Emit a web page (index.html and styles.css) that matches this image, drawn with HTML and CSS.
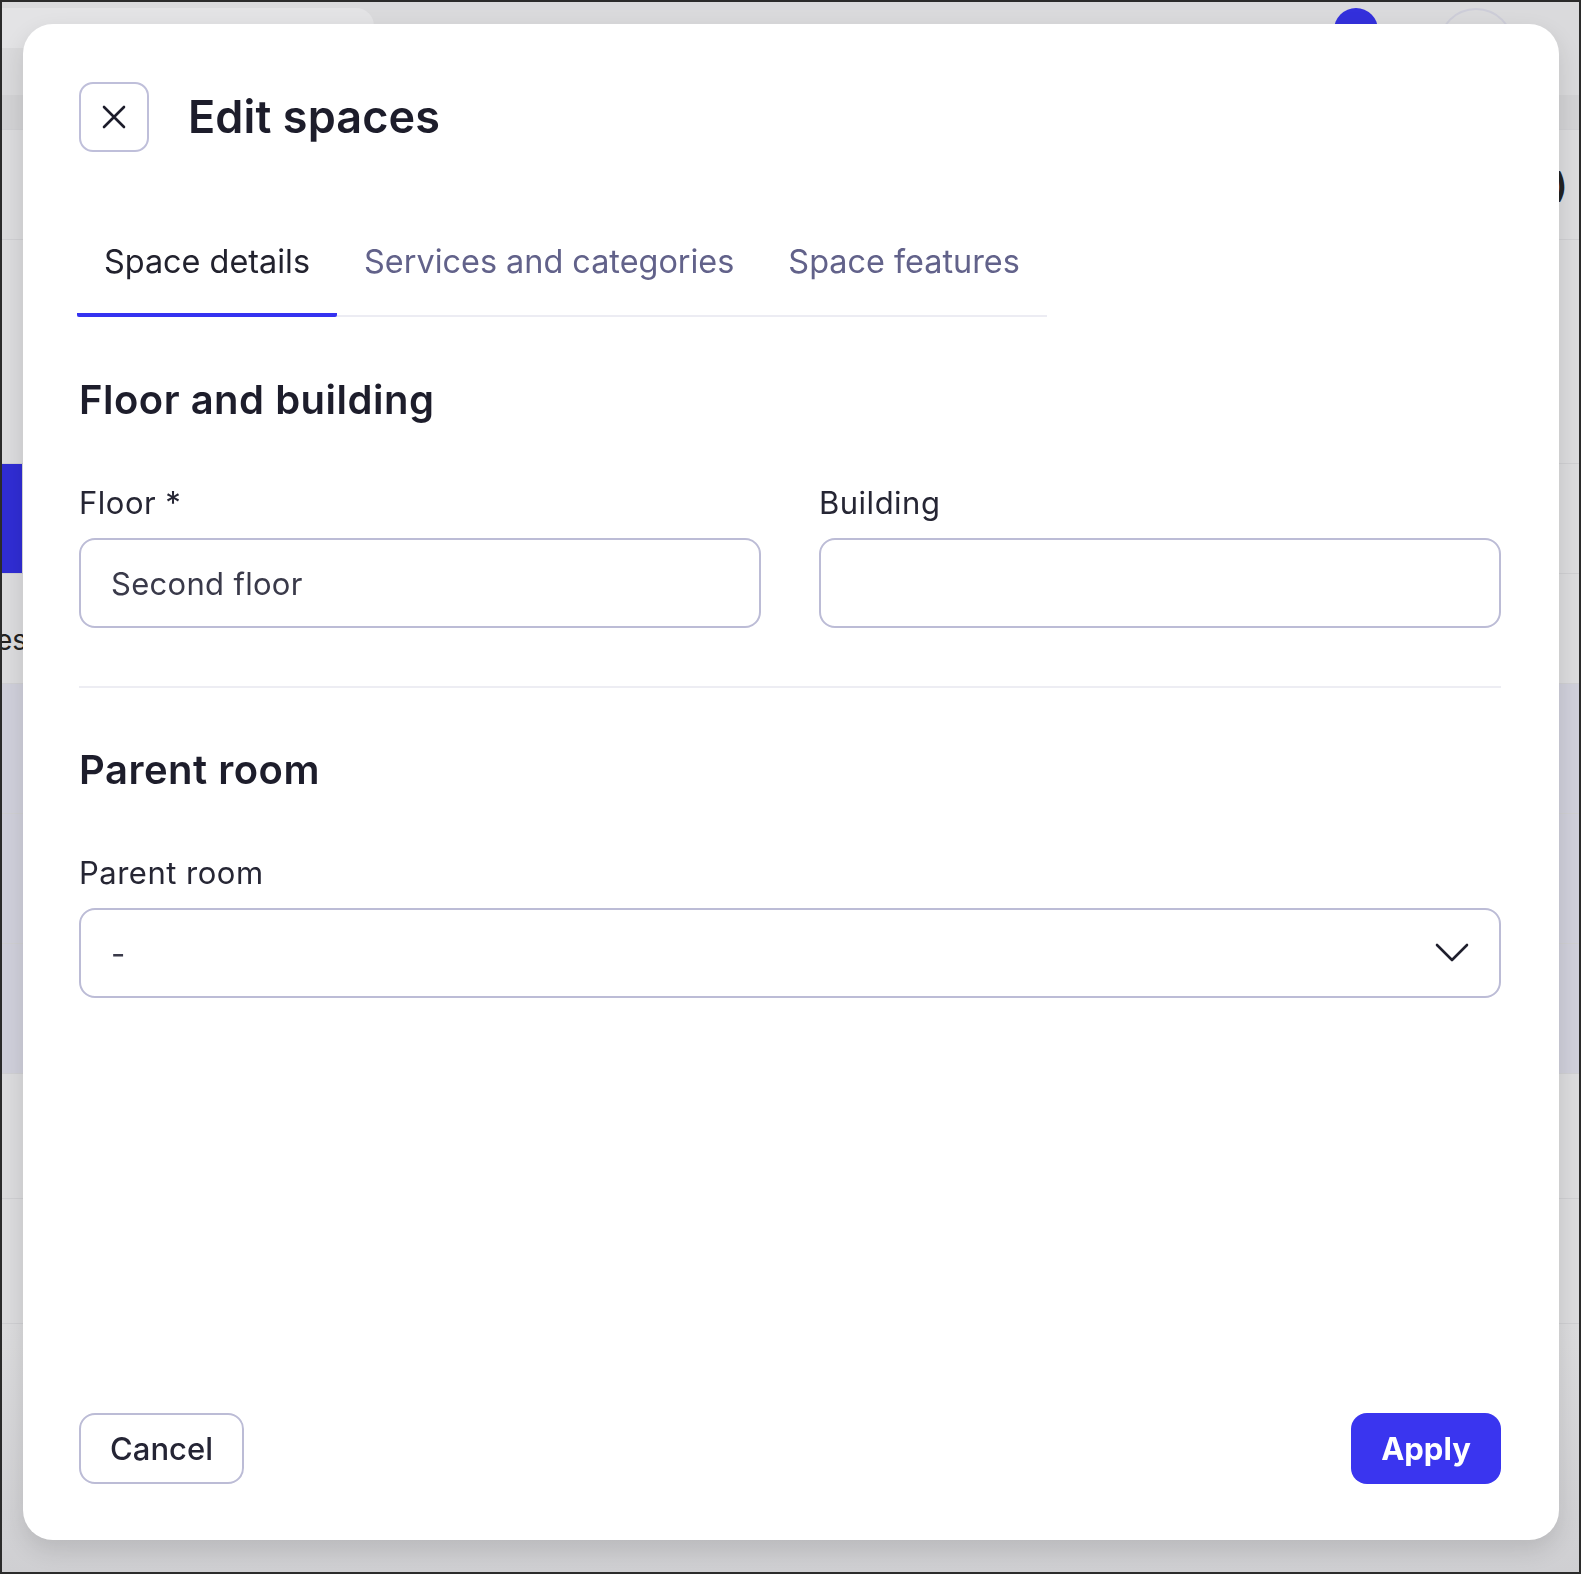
FILE: index.html
```html
<!DOCTYPE html>
<html lang="en">
<head>
    <meta charset="UTF-8">
    <meta name="viewport" content="width=device-width, initial-scale=1.0">
    <title>Edit spaces</title>
    <link rel="stylesheet" href="styles.css">
</head>
<body>
    <div class="app">
        <div class="topbar">
            <div class="crumb"></div>
            <div class="badge"></div>
            <div class="avatar"></div>
        </div>
        <div class="row row-dark"></div>
        <div class="row row-head"><span class="side"></span><span class="more">)</span></div>
        <div class="row row-tall"></div>
        <div class="row row-sel"><span class="side"></span></div>
        <div class="row row-label"><span class="side">es</span></div>
        <div class="row row-lav"></div>
        <div class="row row-lav"></div>
        <div class="row row-lav"></div>
        <div class="row"></div>
        <div class="row"></div>
        <div class="row row-last"></div>
    </div>

    <div class="overlay">
        <div class="modal">
            <div class="modal-header">
                <button class="close-btn" aria-label="Close">
                    <svg width="24" height="24" viewBox="0 0 24 24" fill="none" stroke="#1c1c2a" stroke-width="2.6" stroke-linecap="round">
                        <path d="M2 2 L22 22 M22 2 L2 22"/>
                    </svg>
                </button>
                <h1>Edit spaces</h1>
            </div>

            <div class="tabs">
                <div class="tab active">Space details</div>
                <div class="tab">Services and categories</div>
                <div class="tab">Space features</div>
            </div>

            <h2>Floor and building</h2>
            <div class="form-row">
                <div class="field">
                    <label for="floor">Floor *</label>
                    <input type="text" id="floor" value="Second floor">
                </div>
                <div class="field">
                    <label for="building">Building</label>
                    <input type="text" id="building">
                </div>
            </div>

            <hr class="divider">

            <h2 class="second">Parent room</h2>
            <div class="field">
                <label for="parent">Parent room</label>
                <div class="select" id="parent">
                    <span>-</span>
                    <svg width="34" height="20" viewBox="0 0 34 20" fill="none" stroke="#1f1f2d" stroke-width="2.6" stroke-linecap="round" stroke-linejoin="round">
                        <path d="M2 2 L17 17 L32 2"/>
                    </svg>
                </div>
            </div>

            <div class="modal-footer">
                <button class="btn btn-secondary">Cancel</button>
                <button class="btn btn-primary">Apply</button>
            </div>
        </div>
    </div>
</body>
</html>
```

FILE: styles.css
```css
* {
    box-sizing: border-box;
}

body {
    margin: 0;
    font-family: Inter, "Noto Sans", sans-serif;
    background: #dcdcde;
}

/* dimmed app behind the dialog */
.app {
    height: 1574px;
    border: 2px solid #2b2b2b;
    background: #dcdcde;
    display: flex;
    flex-direction: column;
    overflow: hidden;
}

.topbar {
    height: 93px;
    display: flex;
    align-items: flex-start;
    padding-top: 6px;
    background: #dadadc;
}

.crumb {
    width: 372px;
    height: 40px;
    background: #e3e3e5;
    border-radius: 0 18px 0 0;
}

.badge {
    width: 44px;
    height: 44px;
    margin-left: 960px;
    border-radius: 50%;
    background: #3330dc;
}

.avatar {
    width: 76px;
    height: 76px;
    margin-left: 60px;
    border-radius: 50%;
    border: 2px solid #cdcdd8;
}

.row {
    height: 125px;
    display: flex;
    align-items: center;
    border-bottom: 1px solid #d0d0d3;
}

.row-dark {
    height: 35px;
    background: #d3d3d5;
}

.row-head {
    height: 110px;
    justify-content: space-between;
}

.more {
    font-size: 34px;
    font-weight: 700;
    color: #222;
    margin-right: 12px;
}

.row-tall {
    height: 224px;
}

.row-sel {
    height: 110px;
    align-items: stretch;
}

.row-sel .side {
    width: 20px;
    background: #302dd4;
}

.row-label {
    height: 110px;
    padding-top: 22px;
}

.row-label .side {
    font-size: 28px;
    color: #222;
    margin-left: -6px;
}

.row-lav {
    height: 130px;
    background: #d0d0db;
}

.row-last {
    flex: 1;
    border-bottom: none;
    background: linear-gradient(#dcdcde, #cfcfd2);
}

/* dialog */
.overlay {
    position: fixed;
    inset: 0;
    padding: 24px 22px 34px 23px;
}

.modal {
    height: 100%;
    background: #fff;
    border-radius: 30px;
    box-shadow: 0 10px 24px rgba(0, 0, 0, 0.12);
    padding: 58px 58px 56px 56px;
    display: flex;
    flex-direction: column;
    color: #1d1d2b;
}

.modal-header {
    display: flex;
    align-items: center;
    gap: 39px;
}

.close-btn {
    width: 70px;
    height: 70px;
    border: 2px solid #bfbfda;
    border-radius: 14px;
    background: #fff;
    display: flex;
    align-items: center;
    justify-content: center;
    padding: 0;
}

h1 {
    margin: 0;
    font-size: 45px;
    font-weight: 600;
    line-height: 54px;
    letter-spacing: 0.1px;
}

.tabs {
    display: flex;
    align-self: flex-start;
    margin-top: 91px;
    margin-left: -2px;
    border-bottom: 2px solid #ececf3;
}

.tab {
    padding: 0 27px 32px;
    margin-bottom: -2px;
    font-size: 32.4px;
    line-height: 38px;
    color: #62628a;
    border-bottom: 4px solid transparent;
}

.tab.active {
    color: #22222e;
    border-bottom-color: #3532f0;
    border-radius: 0 0 2px 2px;
}

h2 {
    margin: 59px 0 0;
    font-size: 40px;
    font-weight: 600;
    line-height: 48px;
    letter-spacing: 0.5px;
}

h2.second {
    margin-top: 58px;
}

.form-row {
    display: grid;
    grid-template-columns: 1fr 1fr;
    gap: 58px;
    margin-top: 60px;
}

.field {
    display: flex;
    flex-direction: column;
    gap: 17px;
}

.modal > .field {
    margin-top: 60px;
}

label {
    font-size: 31px;
    line-height: 37px;
    letter-spacing: 0.5px;
    color: #262634;
}

input[type="text"], .select {
    height: 90px;
    border: 2px solid #bcbcd6;
    border-radius: 16px;
    padding: 0 30px;
    font-family: inherit;
    font-size: 31px;
    letter-spacing: 0.3px;
    color: #3a3a4a;
    background: #fff;
}

.select {
    display: flex;
    align-items: center;
    justify-content: space-between;
    padding-right: 30px;
}

.divider {
    margin: 58px 0 0;
    border: none;
    border-top: 2px solid #ededf3;
}

.modal-footer {
    margin-top: auto;
    display: flex;
    justify-content: space-between;
}

.btn {
    height: 71px;
    border-radius: 16px;
    font-family: inherit;
    font-size: 31px;
    cursor: pointer;
}

.btn-secondary {
    width: 165px;
    border: 2px solid #bcbcd6;
    background: #fff;
    color: #252535;
    font-weight: 500;
}

.btn-primary {
    width: 150px;
    border: none;
    background: #3a35ef;
    color: #fff;
    font-weight: 700;
}
```
